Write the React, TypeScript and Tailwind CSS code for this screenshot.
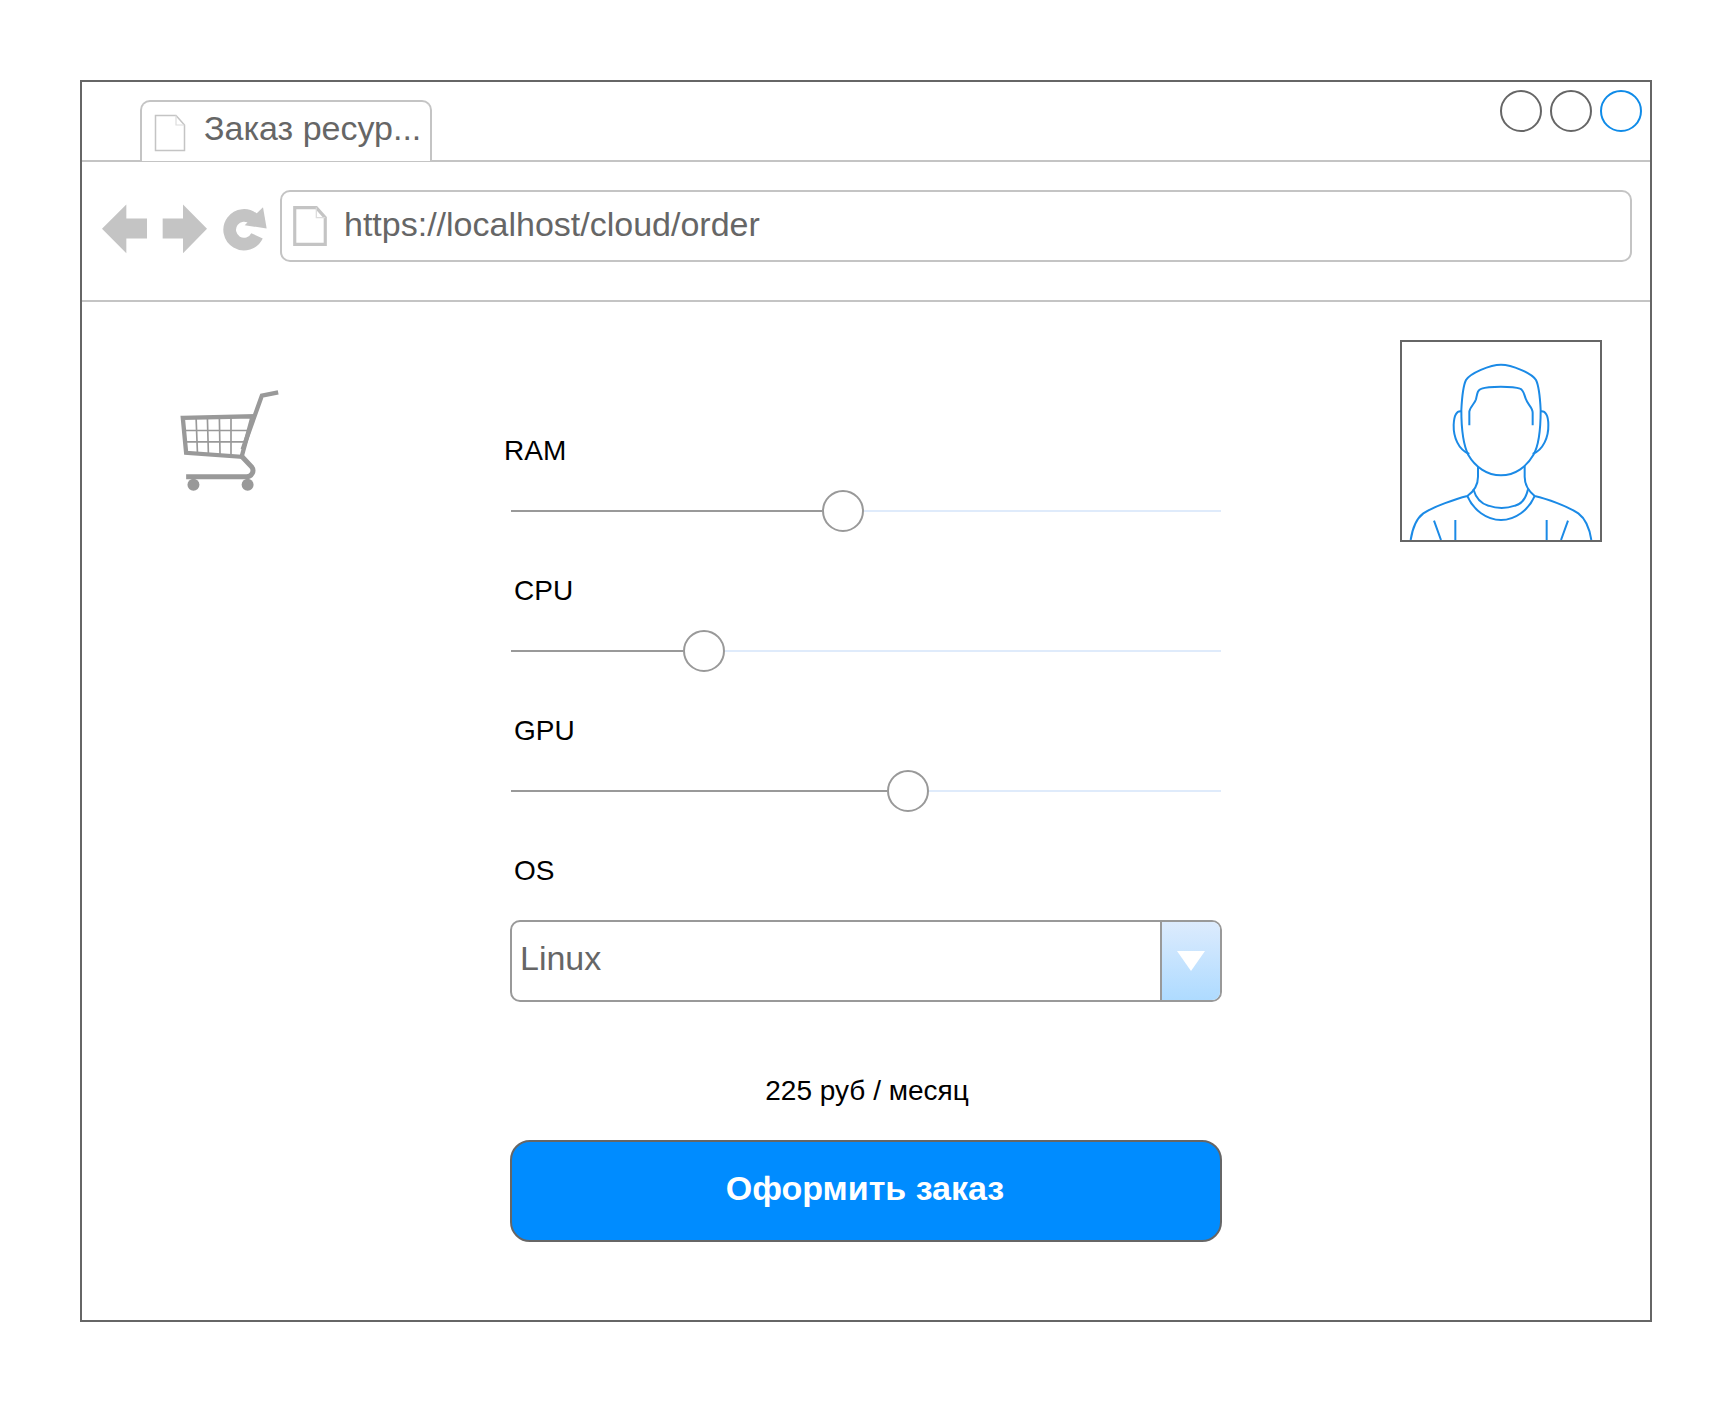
const font = "font-['Liberation_Sans',Arial,sans-serif]";

const sliders = [
  { label: 'CPU', filled: 'w-[172px]' },
  { label: 'GPU', filled: 'w-[376px]' },
];

const DocIcon = ({ className, stroke }: { className: string; stroke: number }) => (
  <svg viewBox="0 0 32 38" className={className} fill="none">
    <path d="M1.5 1.5H22L30.5 11V36.5H1.5Z" stroke="#c4c4c4" strokeWidth={stroke} />
    <path d="M22 1.5V11H30.5" stroke="#dcdcdc" strokeWidth="1.2" />
  </svg>
);

const NavIcons = () => (
  <svg viewBox="97 400 495 152" className="w-[165px] h-[51px] shrink-0 mt-[4px]" fill="#c4c4c4">
    <polygon points="97,477 170,404 170,446 232,446 232,506 170,506 170,550" />
    <polygon points="279,446 340,446 340,404 412,477 340,550 340,506 279,506" />
    <path d="M552 448A43 43 0 1 0 562 498" fill="none" stroke="#c4c4c4" strokeWidth="38" />
    <polygon points="580,412 591,476 525,466" />
  </svg>
);

const CartIcon = () => (
  <svg viewBox="55 55 310 325" className="w-[104px] h-[108px]" fill="none" stroke="#999999">
    <path d="M355 68L306 78L248 240" strokeWidth="13" />
    <path d="M68 145L278 140L245 262L78 250Z" strokeWidth="13" strokeLinejoin="miter" />
    <path d="M108 145L112 250M142 145L145 252M178 143L180 255M213 142L213 258M72 183L266 183M76 217L256 217" strokeWidth="5" />
    <path d="M243 258L275 292C285 305 275 322 260 322H78" strokeWidth="15" />
    <circle cx="100" cy="346" r="18" fill="#999999" stroke="none" />
    <circle cx="263" cy="346" r="18" fill="#999999" stroke="none" />
  </svg>
);

const Avatar = () => (
  <div className="w-[202px] h-[202px] border-2 border-[#666666] shrink-0">
    <svg viewBox="36 36 594 594" className="w-full h-full" fill="none" stroke="#1b8ae6" strokeWidth="6">
      <path d="M214 240C216 200 218 170 228 150C240 130 300 104 333 104C366 104 425 130 438 150C448 170 450 200 452 240C452 300 445 350 430 375C410 410 375 436 333 436C291 436 255 410 235 375C220 345 214 300 214 240Z" />
      <path d="M238 286L238 245C240 230 255 220 258 208C262 190 262 180 275 176C295 168 370 168 390 176C402 180 402 195 408 208C412 222 428 232 428 248L428 286" />
      <path d="M214 244C200 242 192 255 191 285C190 320 205 360 238 372" />
      <path d="M452 244C466 242 475 255 475 285C476 320 460 360 428 372" />
      <path d="M264 408L264 440C264 465 250 485 232 498C200 506 130 530 100 550C80 565 68 590 62 630" />
      <path d="M404 408L404 440C404 465 418 485 434 498C470 506 535 530 565 550C585 565 598 590 604 630" />
      <path d="M250 478C258 505 275 522 295 527C320 536 350 536 375 527C395 522 408 505 414 478" />
      <path d="M232 498C250 540 290 570 333 570C376 570 416 540 434 498" />
      <path d="M132 572L153 630M196 570L196 630M470 570L470 630M534 572L513 630" />
    </svg>
  </div>
);

const Slider = ({ filled }: { filled: string }) => (
  <div className="flex items-center h-[42px]">
    <div className={`${filled} h-[2px] bg-[#999999]`} />
    <div className="w-[42px] h-[42px] rounded-full border-2 border-[#999999] bg-white shrink-0" />
    <div className="flex-1 h-[2px] bg-[#dfebfb]" />
  </div>
);

export default function App() {
  return (
    <div className={`${font} bg-white w-[1732px] h-[1402px] pt-[80px] pl-[80px]`}>
      <div className="w-[1572px] h-[1242px] border-2 border-[#666666] flex flex-col">
        {/* tab strip */}
        <div className="h-[80px] border-b-2 border-[#c4c4c4] flex justify-between pl-[58px] pr-[8px] shrink-0">
          <div className="w-[292px] h-[61px] mt-[18px] border-2 border-b-0 border-[#c4c4c4] rounded-t-[10px] bg-white flex pl-[12px] pt-[12px] gap-[18px]">
            <DocIcon className="w-[32px] h-[38px] shrink-0" stroke={1.5} />
            <span className="text-[34px] leading-[34px] text-[#666666] mt-[-3px] whitespace-nowrap">Заказ ресур...</span>
          </div>
          <div className="flex gap-[8px] pt-[8px]">
            <div className="w-[42px] h-[42px] rounded-full border-2 border-[#666666]" />
            <div className="w-[42px] h-[42px] rounded-full border-2 border-[#666666]" />
            <div className="w-[42px] h-[42px] rounded-full border-2 border-[#0f8be8]" />
          </div>
        </div>

        {/* address bar */}
        <div className="h-[140px] border-b-2 border-[#c4c4c4] flex items-center pl-[20px] pr-[18px] pb-[10px] gap-[13px] shrink-0">
          <NavIcons />
          <div className="flex-1 h-[72px] border-2 border-[#c4c4c4] rounded-[10px] flex items-center pl-[11px] gap-[17px]">
            <DocIcon className="w-[34px] h-[40px] shrink-0" stroke={3} />
            <span className="text-[34px] text-[#666666] mt-[-4px]">https://localhost/cloud/order</span>
          </div>
        </div>

        {/* page */}
        <div className="flex flex-1">
          <div className="w-[429px] pl-[96px] pt-[86px] shrink-0">
            <CartIcon />
          </div>

          <div className="w-[710px] pt-[133px] shrink-0 flex flex-col">
            <div className="h-[32px] leading-[32px] text-[28px] text-black ml-[-7px]">RAM</div>
            <div className="mt-[23px]">
              <Slider filled="w-[311px]" />
            </div>
            {sliders.map((s) => (
              <div key={s.label}>
                <div className="mt-[43px] h-[32px] leading-[32px] text-[28px] text-black ml-[3px]">{s.label}</div>
                <div className="mt-[23px]">
                  <Slider filled={s.filled} />
                </div>
              </div>
            ))}
            <div className="mt-[43px] h-[32px] leading-[32px] text-[28px] text-black ml-[3px]">OS</div>
            <div className="mt-[33px] -mx-[1px] h-[82px] border-2 border-[#999999] rounded-[10px] flex overflow-hidden">
              <div className="flex-1 pl-[8px] text-[34px] leading-[72px] text-[#666666]">Linux</div>
              <div className="w-[60px] border-l-2 border-[#999999] bg-gradient-to-b from-[#dcebfd] to-[#aedbff] flex items-center justify-center">
                <svg viewBox="0 0 28 20" className="w-[28px] h-[20px]">
                  <polygon points="0,0 28,0 14,20" fill="#ffffff" />
                </svg>
              </div>
            </div>
            <div className="mt-[72px] pl-[2px] h-[34px] leading-[34px] text-center text-[28px] text-black">225 руб / месяц</div>
            <div className="mt-[32px] -mx-[1px] h-[102px] border-2 border-[#666666] rounded-[20px] bg-[#008cff] flex items-center justify-center pb-[6px] pr-[2px] text-[34px] font-bold text-white">
              Оформить заказ
            </div>
          </div>

          <div className="pl-[179px] pt-[38px]">
            <Avatar />
          </div>
        </div>
      </div>
    </div>
  );
}
